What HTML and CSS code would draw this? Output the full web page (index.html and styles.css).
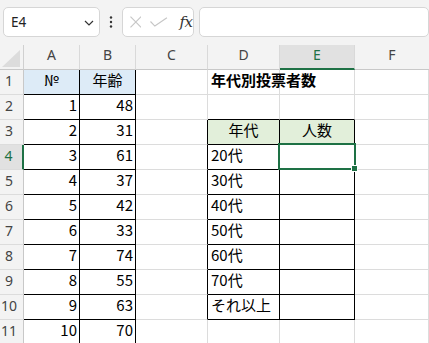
FILE: index.html
```html
<!DOCTYPE html>
<html lang="ja">
<head>
<meta charset="utf-8">
<title>年代別投票者数</title>
<link rel="stylesheet" href="styles.css">
</head>
<body>
<div class="toolbar">
  <div class="namebox">
    <span class="nb-text">E4</span>
    <svg class="chev" width="10" height="6" viewBox="0 0 10 6"><path d="M1 1 L5 5 L9 1" fill="none" stroke="#333" stroke-width="1.2"/></svg>
  </div>
  <div class="dots">
    <svg width="4" height="12" viewBox="0 0 4 12"><circle cx="2" cy="1.5" r="1.2" fill="#333"/><circle cx="2" cy="6" r="1.2" fill="#333"/><circle cx="2" cy="10.5" r="1.2" fill="#333"/></svg>
  </div>
  <div class="fxbox">
    <svg class="ico-x" width="12" height="12" viewBox="0 0 12 12"><path d="M0.5 0.5 L11.5 11.5 M11.5 0.5 L0.5 11.5" stroke="#c6c6c6" stroke-width="1.2" fill="none"/></svg>
    <svg class="ico-ok" width="18" height="10" viewBox="0 0 18 10"><path d="M0.5 4.5 L5 9.2 L17.5 0.5" stroke="#c6c6c6" stroke-width="1.2" fill="none"/></svg>
    <span class="fx">fx</span>
  </div>
  <div class="formula"></div>
</div>

<div class="sheet">
  <!-- header row -->
  <div class="corner"><svg width="18" height="17" viewBox="0 0 18 17"><path d="M18 0 L18 17 L0 17 Z" fill="#dcdcdc"/></svg></div>
  <div class="ch">A</div>
  <div class="ch">B</div>
  <div class="ch">C</div>
  <div class="ch">D</div>
  <div class="ch ch-sel">E</div>
  <div class="ch ch-last">F</div>

  <!-- row 1 -->
  <div class="rh">1</div>
  <div class="c bd blue ctr">№</div>
  <div class="c bd blue ctr">年齢</div>
  <div class="c"></div>
  <div class="c title">年代別投票者数</div>
  <div class="c"></div>
  <div class="c"></div>

  <!-- row 2 -->
  <div class="rh">2</div>
  <div class="c bd num">1</div>
  <div class="c bd num">48</div>
  <div class="c"></div>
  <div class="c bb"></div>
  <div class="c bb"></div>
  <div class="c"></div>

  <!-- row 3 -->
  <div class="rh">3</div>
  <div class="c bd num">2</div>
  <div class="c bd num">31</div>
  <div class="c br"></div>
  <div class="c bd green ctr">年代</div>
  <div class="c bd green ctr">人数</div>
  <div class="c"></div>

  <!-- row 4 -->
  <div class="rh rh-sel">4</div>
  <div class="c bd num">3</div>
  <div class="c bd num">61</div>
  <div class="c br"></div>
  <div class="c bd">20代</div>
  <div class="c bd sel"><div class="selbox"><div class="handle"></div></div></div>
  <div class="c"></div>

  <!-- row 5 -->
  <div class="rh">5</div>
  <div class="c bd num">4</div>
  <div class="c bd num">37</div>
  <div class="c br"></div>
  <div class="c bd">30代</div>
  <div class="c bd"></div>
  <div class="c"></div>

  <!-- row 6 -->
  <div class="rh">6</div>
  <div class="c bd num">5</div>
  <div class="c bd num">42</div>
  <div class="c br"></div>
  <div class="c bd">40代</div>
  <div class="c bd"></div>
  <div class="c"></div>

  <!-- row 7 -->
  <div class="rh">7</div>
  <div class="c bd num">6</div>
  <div class="c bd num">33</div>
  <div class="c br"></div>
  <div class="c bd">50代</div>
  <div class="c bd"></div>
  <div class="c"></div>

  <!-- row 8 -->
  <div class="rh">8</div>
  <div class="c bd num">7</div>
  <div class="c bd num">74</div>
  <div class="c br"></div>
  <div class="c bd">60代</div>
  <div class="c bd"></div>
  <div class="c"></div>

  <!-- row 9 -->
  <div class="rh">9</div>
  <div class="c bd num">8</div>
  <div class="c bd num">55</div>
  <div class="c br"></div>
  <div class="c bd">70代</div>
  <div class="c bd"></div>
  <div class="c"></div>

  <!-- row 10 -->
  <div class="rh">10</div>
  <div class="c bd num">9</div>
  <div class="c bd num">63</div>
  <div class="c br"></div>
  <div class="c bd">それ以上</div>
  <div class="c bd"></div>
  <div class="c"></div>

  <!-- row 11 -->
  <div class="rh">11</div>
  <div class="c bd num">10</div>
  <div class="c bd num">70</div>
  <div class="c"></div>
  <div class="c"></div>
  <div class="c"></div>
  <div class="c"></div>
</div>
</body>
</html>
```

FILE: styles.css
```css
* { box-sizing: border-box; }
html, body {
  margin: 0;
  padding: 0;
  width: 429px;
  height: 343px;
  overflow: hidden;
  background: #f3f3f3;
}
body {
  font-family: "Noto Sans CJK JP", "Noto Sans", sans-serif;
  color: #000;
}

/* ---------- toolbar ---------- */
.toolbar {
  height: 45px;
  display: flex;
  align-items: flex-start;
  padding: 7px 0 0 3px;
}
.namebox {
  width: 101px;
  height: 30px;
  background: #fff;
  border: 1px solid #d6d6d6;
  border-radius: 5px;
  display: flex;
  align-items: center;
  justify-content: space-between;
  padding: 0 4px 0 7px;
}
.nb-text {
  font-family: "Noto Sans", sans-serif;
  font-size: 13.5px;
  color: #222;
}
.chev { margin-right: 1px; margin-top: 1px; }
.dots {
  width: 22px;
  height: 30px;
  display: flex;
  align-items: center;
  justify-content: center;
}
.fxbox {
  width: 72px;
  height: 30px;
  background: #fff;
  border: 1px solid #d6d6d6;
  border-radius: 5px;
  display: flex;
  align-items: center;
  padding: 0 0 0 7px;
}
.ico-x { margin-right: 9px; }
.ico-ok { margin-right: 12px; margin-top: 0px; }
.fx {
  font-family: "DejaVu Serif", "Liberation Serif", serif;
  font-style: italic;
  font-size: 15px;
  color: #333;
  letter-spacing: -0.5px;
}
.formula {
  margin-left: 5px;
  width: 240px;
  height: 30px;
  background: #fff;
  border: 1px solid #d6d6d6;
  border-radius: 5px;
}

/* ---------- sheet ---------- */
.sheet {
  display: grid;
  grid-template-columns: 24px 56px 56px 72px 72px 75px 1fr;
  grid-auto-rows: 25px;
  background: #fff;
}
.corner {
  background: #f3f3f3;
  border-right: 1px solid #d0d0d0;
  border-bottom: 1px solid #c8c8c8;
  display: flex;
  align-items: flex-end;
  justify-content: flex-end;
  padding: 0 3px 2px 0;
}
.ch {
  background: #f3f3f3;
  border-right: 1px solid #d9d9d9;
  border-bottom: 1px solid #c8c8c8;
  text-align: center;
  font-family: "Noto Sans", sans-serif;
  font-size: 14px;
  line-height: 19px;
  color: #444;
}
.ch-last { border-right: none; }
.ch-sel {
  background: #e1e1e1;
  color: #1e7145;
  border-bottom: 2px solid #1e7145;
}
.rh {
  background: #f3f3f3;
  border-right: 1px solid #c8c8c8;
  border-bottom: 1px solid #dcdcdc;
  text-align: center;
  padding-right: 5px;
  font-family: "Noto Sans", sans-serif;
  font-size: 14px;
  line-height: 22px;
  color: #444;
}
.rh-sel {
  background: #e1e1e1;
  color: #1e7145;
  border-right: 2px solid #1e7145;
}

.c {
  border-right: 1px solid #dcdcdc;
  border-bottom: 1px solid #dcdcdc;
  padding: 0 3px;
  font-size: 15px;
  line-height: 20px;
  white-space: nowrap;
}
.num { text-align: right; padding-right: 2px; }
.ctr { text-align: center; }
.title { font-weight: bold; overflow: visible; }
.bd { border-right-color: #000; border-bottom-color: #000; }
.br { border-right-color: #000; }
.bb { border-bottom-color: #000; }
.blue { background: #ddebf7; }
.green { background: #e2efda; }

.sel { position: relative; }
.selbox {
  position: absolute;
  left: -2px;
  top: -2px;
  right: -2px;
  bottom: -1px;
  border: 2px solid #1e7145;
}
.handle {
  position: absolute;
  right: -4px;
  bottom: -4px;
  width: 7px;
  height: 7px;
  background: #1e7145;
  border: 1px solid #fff;
}
```
